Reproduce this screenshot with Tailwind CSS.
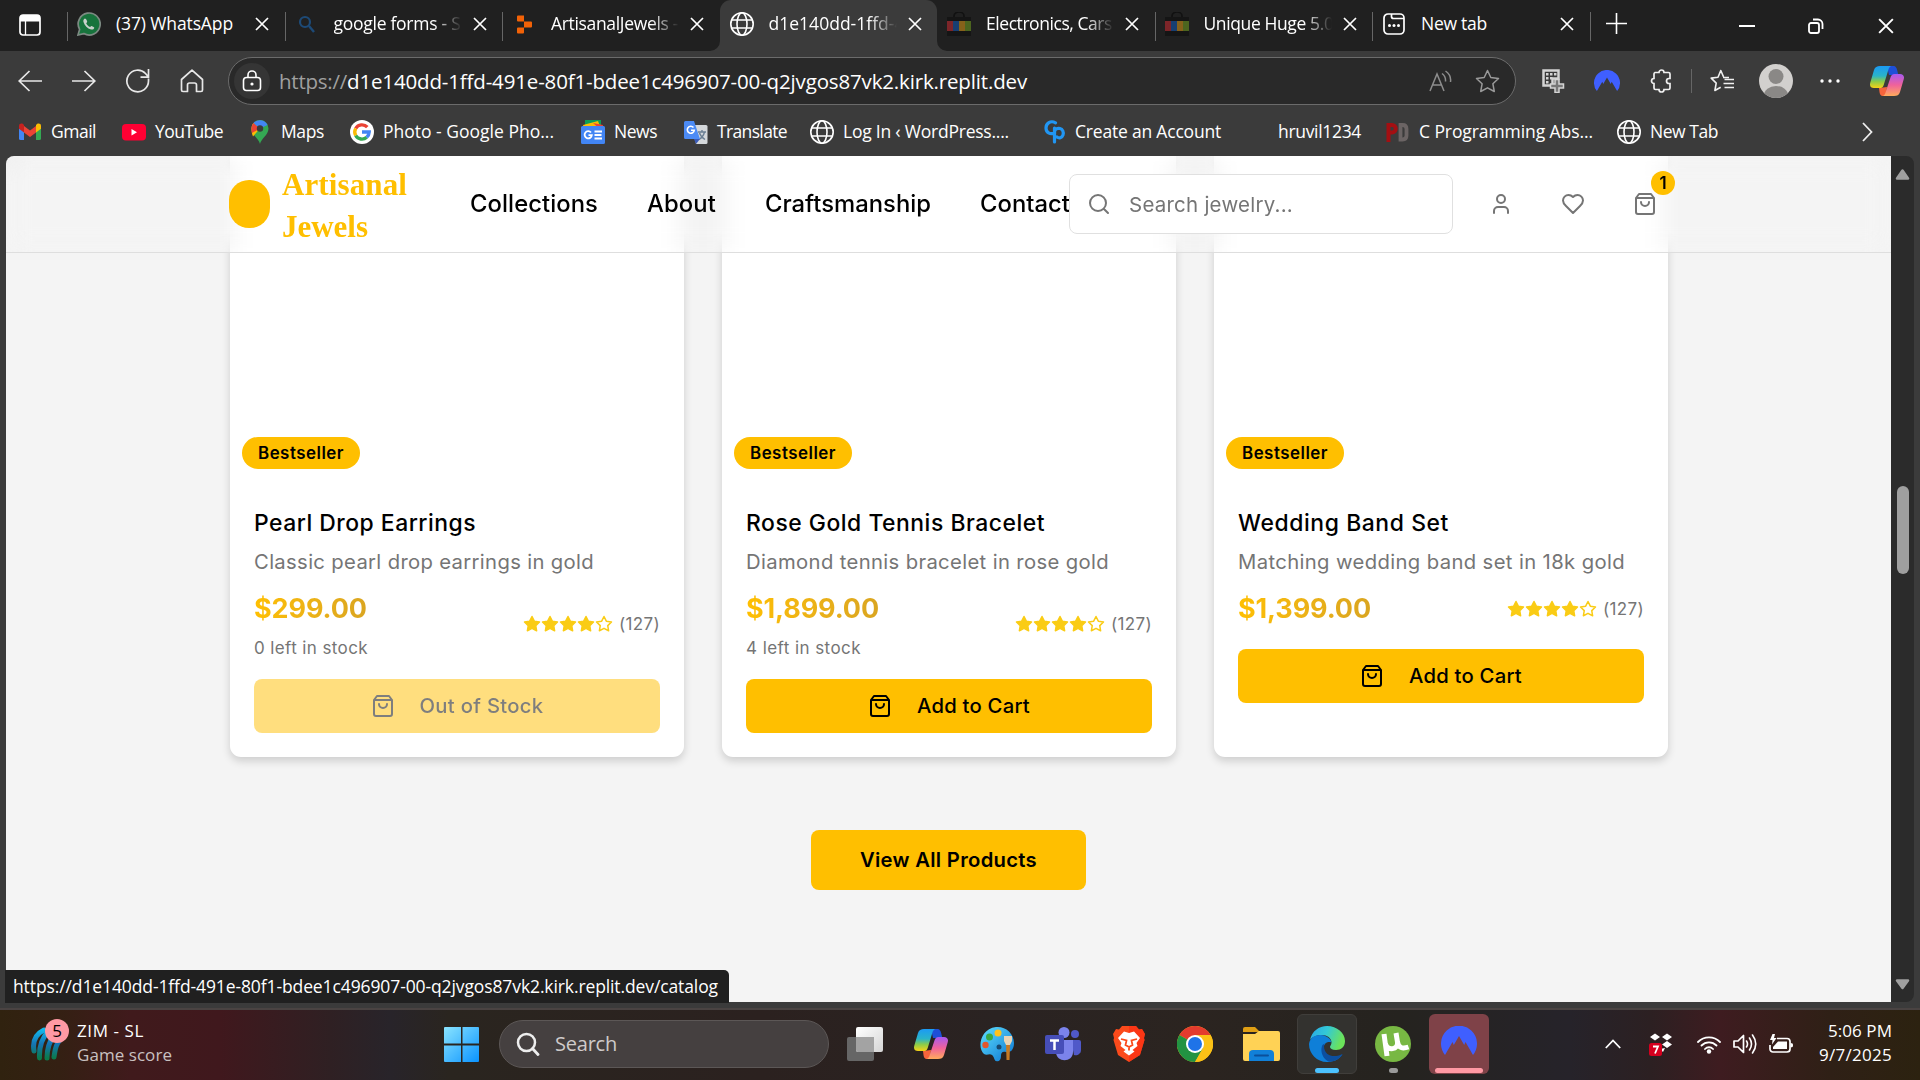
<!DOCTYPE html>
<html lang="en">
<head>
<meta charset="utf-8">
<title>Artisanal Jewels</title>
<script src="https://cdn.jsdelivr.net/npm/@tailwindcss/browser@4"></script>
</head>
<body class="w-[1920px] h-[1080px] overflow-hidden bg-[#3b3b3b] font-['Open_Sans','Noto_Sans',sans-serif] text-white">

<!-- Shared icons -->
<svg class="absolute w-0 h-0">
  <symbol id="x" viewBox="0 0 14 14"><path d="M1 1l12 12M13 1L1 13" fill="none" stroke="currentColor" stroke-width="1.7"/></symbol>
  <symbol id="globe" viewBox="0 0 24 24"><g fill="none" stroke="currentColor" stroke-width="1.6"><circle cx="12" cy="12" r="11.2"/><ellipse cx="12" cy="12" rx="5" ry="11.2"/><path d="M2 8h20M2 16h20"/></g></symbol>
  <symbol id="shop" viewBox="0 0 24 24"><path d="M7 6V4a5 4 0 0 1 10 0v2" fill="none" stroke="#111" stroke-width="1.6"/><path d="M0 5h24v19H0z" fill="#151515"/><path d="M0 9h6v10H0z" fill="#7d2529"/><path d="M6 9h6v10H6z" fill="#173f72"/><path d="M12 9h6v10h-6z" fill="#86611a"/><path d="M18 9h6v10h-6z" fill="#4c651f"/></symbol>
  <symbol id="bag" viewBox="0 0 24 24"><path d="M6 2 3 6v14a2 2 0 0 0 2 2h14a2 2 0 0 0 2-2V6l-3-4ZM3 6h18M16 10a4 4 0 0 1-8 0" fill="none" stroke="currentColor" stroke-width="2" stroke-linecap="round" stroke-linejoin="round"/></symbol>
  <symbol id="star" viewBox="0 0 24 24"><path d="m12 2 3.09 6.26L22 9.27l-5 4.87 1.18 6.88L12 17.77l-6.18 3.25L7 14.14 2 9.27l6.91-1.01z" stroke="#facc15" stroke-width="2" stroke-linejoin="round"/></symbol>
  <symbol id="nord" viewBox="0 0 36 30"><path d="M4 29A18 18 0 1 1 32 29L24.5 16l-1.3 3L18 10l-5.2 9-1.3-3z" fill="#3f5fff"/></symbol>
  <linearGradient id="cpa" x1="0" y1="0" x2="0" y2="1"><stop offset="0" stop-color="#1b9af5"/><stop offset=".45" stop-color="#2ab4c8"/><stop offset=".7" stop-color="#8ccb4a"/><stop offset="1" stop-color="#f7d215"/></linearGradient>
  <linearGradient id="cpb" x1="0" y1="0" x2="0" y2="1"><stop offset="0" stop-color="#a759f0"/><stop offset=".5" stop-color="#f0629b"/><stop offset="1" stop-color="#ffab5c"/></linearGradient>
  <symbol id="copilot" viewBox="0 0 34 30"><path d="M17 0h6c3 0 3.600 2 4.400 5l1 4H19z" fill="#1e4fd8"/><path d="M9 22l8-1-1 9h-3c-3 0-3.400-2-4-8z" fill="#f5643c"/><path d="M10 0h11c-2 1-2.500 3-3.300 6l-4 13c-.8 2.500-2 3-4.200 3H4c-3 0-4.600-2-3.800-5L4 4c1-3 3-4 6-4z" fill="url(#cpa)"/><path d="M24 30H13c2-1 2.500-3 3.300-6l4-12c.8-2.500 2-4 4.200-4H30c3 0 4.600 2 3.800 5L30 26c-1 3-3 4-6 4z" fill="url(#cpb)"/></symbol>
</svg>

<!-- Tab strip -->
<div class="flex h-[51px] bg-[#202020] text-[17.5px] leading-[47px]">
  <div class="w-[67px] shrink-0 flex items-center justify-center pr-2 pb-0.5">
    <svg class="w-[22px] h-[22px]" viewBox="0 0 22 22"><rect x="1" y="1" width="20" height="20" rx="3" fill="none" stroke="#fff" stroke-width="1.7"/><path d="M1 4a3 3 0 0 1 3-3h14a3 3 0 0 1 3 3v3.500H1z" fill="#fff"/><path d="M6.500 7v14" stroke="#fff" stroke-width="1.300"/></svg>
  </div>
  <div class="relative w-[217.5px] shrink-0 flex items-center pl-[10px] pb-1">
    <span class="absolute left-0 top-3 w-px h-[29px] bg-[#666]"></span>
    <svg class="w-6 h-6 mr-[15px] shrink-0" viewBox="0 0 24 24"><path d="M1 23l1.600-5.600A11 11 0 1 1 6.800 21.600z" fill="#17733c" stroke="#7c8a82" stroke-width="1.700"/><path d="M8 6.500c-1.500.5-2 2-1.500 3.500 1 3.500 4 6.500 7.500 7.500 1.600.4 3-.4 3.300-1.800.1-.6-2.600-2-3-1.800l-1.200 1.200c-1.600-.6-3.200-2.200-3.900-3.900l1-1.200c.2-.5-1-3.500-2.200-3.500z" fill="#c7d0ca"/></svg>
    <span class="w-[128px] whitespace-nowrap"><span data-w="117">(37) WhatsApp</span></span>
    <svg class="w-[14px] h-[14px] ml-[11px]"><use href="#x"/></svg>
  </div>
  <div class="relative w-[217.5px] shrink-0 flex items-center pl-[10px] pb-1">
    <span class="absolute left-0 top-3 w-px h-[29px] bg-[#666]"></span>
    <svg class="w-6 h-6 mr-[15px] shrink-0" viewBox="0 0 24 24"><circle cx="10" cy="10" r="5" fill="none" stroke="#1d4a77" stroke-width="2.200"/><path d="M14 14l5 6" stroke="#1d4a77" stroke-width="2.400"/></svg>
    <span class="w-[128px] overflow-hidden whitespace-nowrap mask-r-from-78%"><span data-w="127">google forms - S</span></span>
    <svg class="w-[14px] h-[14px] ml-[11px]"><use href="#x"/></svg>
  </div>
  <div class="relative w-[217.5px] shrink-0 flex items-center pl-[10px] pb-1">
    <span class="absolute left-0 top-3 w-px h-[29px] bg-[#666]"></span>
    <svg class="w-6 h-6 mr-[15px] shrink-0" viewBox="0 0 24 24"><path d="M5 4.500a1 1 0 0 1 1-1h6v6H6a1 1 0 0 1-1-1zM12 9.500h7a1 1 0 0 1 1 1v4a1 1 0 0 1-1 1h-7zM5 16.500a1 1 0 0 1 1-1h6v5a1 1 0 0 1-1 1H6a1 1 0 0 1-1-1z" fill="#f26207"/></svg>
    <span class="w-[128px] overflow-hidden whitespace-nowrap mask-r-from-78%"><span data-w="127">ArtisanalJewels -</span></span>
    <svg class="w-[14px] h-[14px] ml-[11px]"><use href="#x"/></svg>
  </div>
  <div class="relative w-[217.5px] shrink-0 flex items-center pl-[10px] pb-1 bg-[#3b3b3b] rounded-t-[11px]">
    <svg class="absolute -left-[10px] bottom-0 w-[10px] h-[10px]" viewBox="0 0 10 10"><path d="M10 0v10H0A10 10 0 0 0 10 0z" fill="#3b3b3b"/></svg>
    <svg class="absolute -right-[10px] bottom-0 w-[10px] h-[10px]" viewBox="0 0 10 10"><path d="M0 0v10h10A10 10 0 0 1 0 0z" fill="#3b3b3b"/></svg>
    <svg class="w-6 h-6 mr-[15px] shrink-0"><use href="#globe"/></svg>
    <span class="w-[128px] overflow-hidden whitespace-nowrap mask-r-from-78%"><span data-w="136">d1e140dd-1ffd-4</span></span>
    <svg class="w-[14px] h-[14px] ml-[11px]"><use href="#x"/></svg>
  </div>
  <div class="relative w-[217.5px] shrink-0 flex items-center pl-[10px] pb-1">
    <svg class="w-6 h-6 mr-[15px] shrink-0"><use href="#shop"/></svg>
    <span class="w-[128px] overflow-hidden whitespace-nowrap mask-r-from-78%"><span data-w="126">Electronics, Cars</span></span>
    <svg class="w-[14px] h-[14px] ml-[11px]"><use href="#x"/></svg>
  </div>
  <div class="relative w-[217.5px] shrink-0 flex items-center pl-[10px] pb-1">
    <span class="absolute left-0 top-3 w-px h-[29px] bg-[#666]"></span>
    <svg class="w-6 h-6 mr-[15px] shrink-0"><use href="#shop"/></svg>
    <span class="w-[128px] overflow-hidden whitespace-nowrap mask-r-from-78%"><span data-w="130">Unique Huge 5.0</span></span>
    <svg class="w-[14px] h-[14px] ml-[11px]"><use href="#x"/></svg>
  </div>
  <div class="relative w-[217.5px] shrink-0 flex items-center pl-[10px] pb-1">
    <span class="absolute left-0 top-3 w-px h-[29px] bg-[#666]"></span>
    <svg class="w-6 h-6 mr-[15px] shrink-0" viewBox="0 0 24 24"><rect x="2" y="2" width="20" height="20" rx="4" fill="none" stroke="#fff" stroke-width="1.700"/><path d="M9.500 2v2.500a2 2 0 0 0 2 2H22" fill="none" stroke="#fff" stroke-width="1.700"/><circle cx="7.500" cy="13.500" r="1.500" fill="#fff"/><circle cx="12" cy="13.500" r="1.500" fill="#fff"/><circle cx="16.500" cy="13.500" r="1.500" fill="#fff"/></svg>
    <span class="w-[128px] whitespace-nowrap"><span data-w="66">New tab</span></span>
    <svg class="w-[14px] h-[14px] ml-[11px]"><use href="#x"/></svg>
  </div>
  <div class="relative flex items-center pl-[16px] pb-1 flex-1">
    <span class="absolute left-0 top-3 w-px h-[29px] bg-[#666]"></span>
    <svg class="w-[21px] h-[21px]" viewBox="0 0 21 21"><path d="M10.500 0v21M0 10.500h21" stroke="#fff" stroke-width="1.600"/></svg>
    <div class="flex items-center ml-[112px] mt-1">
      <span class="w-4 h-0.5 bg-white"></span>
      <svg class="w-4 h-4 ml-[53px]" viewBox="0 0 16 16"><rect x="1" y="5" width="10" height="10" rx="2" fill="none" stroke="#fff" stroke-width="1.800"/><path d="M5 1.500h5a4.500 4.500 0 0 1 4.500 4.500v5" fill="none" stroke="#fff" stroke-width="1.800"/></svg>
      <svg class="w-4 h-4 ml-[54px]"><use href="#x"/></svg>
    </div>
  </div>
</div>

<!-- Toolbar -->
<div class="flex items-center h-[60px] pl-[3px]">
  <svg class="w-6 h-[22px] mx-[15px] shrink-0" viewBox="0 0 24 22"><path d="M24 11H1.500M11.500 1L1.200 11l10.300 10" fill="none" stroke="#e8e8e8" stroke-width="1.700"/></svg>
  <svg class="w-6 h-[22px] mx-[15px] shrink-0" viewBox="0 0 24 22"><path d="M0 11h22.500M12.500 1l10.300 10-10.300 10" fill="none" stroke="#e8e8e8" stroke-width="1.700"/></svg>
  <svg class="w-6 h-6 mx-[15px] shrink-0" viewBox="0 0 24 24"><path d="M22.500 9.500V12A10.800 10.800 0 1 1 19.500 4.500L22.500 8M22.500 0v8.200H14.500" fill="none" stroke="#e8e8e8" stroke-width="1.700"/></svg>
  <svg class="w-6 h-6 mx-[15px] shrink-0" viewBox="0 0 24 24"><path d="M1.500 10.500L12 1.200l10.500 9.300V21a1.500 1.500 0 0 1-1.500 1.500h-4.500V16a2 2 0 0 0-2-2h-5a2 2 0 0 0-2 2v6.500H3A1.500 1.500 0 0 1 1.500 21z" fill="none" stroke="#e8e8e8" stroke-width="1.700" stroke-linejoin="round"/></svg>
  <div class="flex items-center w-[1288px] h-12 ml-[9px] rounded-full border border-[#6b6b6b] bg-[#292929] pl-[5px] shrink-0">
    <span class="w-9 h-9 rounded-full bg-[#353535] flex items-center justify-center">
      <svg class="w-5 h-[22px]" viewBox="0 0 20 22"><rect x="1.500" y="7.500" width="17" height="13" rx="3" fill="none" stroke="#fff" stroke-width="1.600"/><path d="M6 7.500V5a4 4 0 0 1 8 0v2.500" fill="none" stroke="#fff" stroke-width="1.600"/><circle cx="10" cy="14" r="1.600" fill="#fff"/></svg>
    </span>
    <span class="ml-[9px] flex text-[20.5px] leading-[46px] whitespace-nowrap"><span class="text-[#a0a0a0]" data-w="68">https://</span><span data-w="680">d1e140dd-1ffd-491e-80f1-bdee1c496907-00-q2jvgos87vk2.kirk.replit.dev</span></span>
    <svg class="w-[23px] h-[22px] ml-auto" viewBox="0 0 23 22"><path d="M1 21L8 4l7 17M3.500 15h9M13 3.500q4 3 3.500 8M16.500 1q6 4 5 11" fill="none" stroke="#8d8d8d" stroke-width="1.500"/></svg>
    <svg class="w-[25px] h-6 ml-[23px] mr-[15px]" viewBox="0 0 25 24"><path d="M12.500 1.500l3.300 7 7.700 1-5.600 5.300 1.400 7.700-6.800-3.700-6.800 3.700 1.400-7.700L1.500 9.500l7.700-1z" fill="none" stroke="#9a9a9a" stroke-width="1.500" stroke-linejoin="round"/></svg>
  </div>
  <svg class="w-6 h-6 ml-[25px] mr-[15px] shrink-0" viewBox="0 0 24 24"><path d="M2.500 1.500h15v8h-6v7h-9z" fill="#3b3b3b" stroke="#d4d4d4" stroke-width="2.500"/><path d="M5 4h2.500v2.500H5zM9 4h2.500v2.500H9zM13 4h2.500v2.500H13zM5 8h2.500v2.500H5zM5 12h2.500v2.500H5zM9 8h2.500v2.500H9z" fill="#d4d4d4"/><path d="M14 10.500h4v4.500h4.500v4H18v4.500h-4V19H9.500v-4H14z" fill="#777" stroke="#d4d4d4" stroke-width="1.500"/></svg>
  <svg class="w-[26px] h-[22px] mx-[14px] shrink-0"><use href="#nord"/></svg>
  <svg class="w-6 h-6 mx-[15px] shrink-0" viewBox="0 0 24 24"><path d="M6 3.500h4a2.500 2.500 0 0 1 5 0h4.500a1.500 1.500 0 0 1 1.500 1.500v4.500h-1a2.500 2.500 0 0 0 0 5h1V19a1.500 1.500 0 0 1-1.500 1.500H15a2.500 2.500 0 0 1-5 0H6.500A1.500 1.500 0 0 1 5 19v-4.500a2.500 2.500 0 0 1 0-5V5a1.500 1.500 0 0 1 1-1.500z" fill="none" stroke="#f0f0f0" stroke-width="1.700"/></svg>
  <span class="w-px h-6 bg-[#666] ml-[3px] mr-[3px] shrink-0"></span>
  <svg class="w-6 h-6 mx-[15px] shrink-0" viewBox="0 0 24 24"><path d="M13.500 7.700L10.800 1.500 8 8.200l-6.800.9 5 5-1.300 7.400 5.800-3.200M14.500 10.500H24M13.500 14.500H24M14.500 18.500H24M13 8.500h6" fill="none" stroke="#f0f0f0" stroke-width="1.600" stroke-linejoin="round"/></svg>
  <svg class="w-[34px] h-[34px] mx-[10px] shrink-0" viewBox="0 0 34 34"><defs><clipPath id="av"><circle cx="17" cy="17" r="17"/></clipPath></defs><circle cx="17" cy="17" r="17" fill="#d2d0ce"/><g clip-path="url(#av)" fill="#8a8886"><circle cx="17" cy="12.500" r="7.500"/><ellipse cx="17" cy="31" rx="12" ry="9"/></g></svg>
  <svg class="w-5 h-1 mx-[17px] shrink-0" viewBox="0 0 20 4"><circle cx="2" cy="2" r="1.700" fill="#fff"/><circle cx="10" cy="2" r="1.700" fill="#fff"/><circle cx="18" cy="2" r="1.700" fill="#fff"/></svg>
  <svg class="w-[34px] h-[30px] ml-[13px] shrink-0"><use href="#copilot"/></svg>
</div>

<!-- Bookmarks bar -->
<div class="flex items-center h-[41px] pl-[18px] text-[17.5px] leading-[41px] whitespace-nowrap">
  <div class="flex items-center gap-[9px] w-[104px] shrink-0">
    <svg class="w-6 h-6 shrink-0" viewBox="0 0 24 24"><path d="M1 6v12.500A1.500 1.500 0 0 0 2.500 20H6V9z" fill="#4285f4"/><path d="M23 6v12.500a1.500 1.500 0 0 1-1.500 1.500H18V9z" fill="#34a853"/><path d="M6 6l6 4.500L18 6v6.500L12 17l-6-4.500z" fill="#ea4335"/><path d="M1 6c0-2.500 2.500-3 4-2l1 1v7.500L1 8.700z" fill="#c5221f"/><path d="M23 6c0-2.500-2.500-3-4-2l-1 1v7.500l5-3.800z" fill="#fbbc04"/></svg>
    <span data-w="45">Gmail</span>
  </div>
  <div class="flex items-center gap-[9px] w-[126px] shrink-0">
    <svg class="w-6 h-6 shrink-0" viewBox="0 0 24 24"><rect x="0" y="4" width="24" height="16.500" rx="4" fill="#ff0033"/><path d="M9.500 9v6.500l5.500-3.250z" fill="#fff"/></svg>
    <span data-w="68">YouTube</span>
  </div>
  <div class="flex items-center gap-[9px] w-[102px] shrink-0">
    <svg class="w-6 h-6 shrink-0" viewBox="0 0 24 24"><path d="M12 24c-.8-5-8.500-9-8.500-15.500A8.500 8.500 0 0 1 12 0a8.500 8.500 0 0 1 8.500 8.500C20.500 15 12.800 19 12 24z" fill="#34a853"/><path d="M5.500 3L12 8.500 5 16.500c-1-2-1.500-5-1.500-8 0-2.500 1-4.500 2-5.500z" fill="#fbbc04"/><path d="M5.500 3L12 8.500 4 13c-.8-3.500-1-7 1.500-10z" fill="#ea4335"/><path d="M5.500 3A8.500 8.500 0 0 1 19.500 5L12 8.500z" fill="#4285f4"/><circle cx="12" cy="8.500" r="3.200" fill="#3b3b3b"/></svg>
    <span data-w="43">Maps</span>
  </div>
  <div class="flex items-center gap-[9px] w-[231px] shrink-0">
    <svg class="w-6 h-6 shrink-0" viewBox="0 0 24 24"><circle cx="12" cy="12" r="12" fill="#fff"/><g fill="none" stroke-width="3.400"><path d="M17.300 7.200A7.200 7.200 0 0 0 5.700 8.500" stroke="#ea4335"/><path d="M5.700 8.500a7.200 7.200 0 0 0 0 7" stroke="#fbbc04"/><path d="M5.700 15.500a7.200 7.200 0 0 0 11 1.800" stroke="#34a853"/><path d="M16.700 17.300A7.200 7.200 0 0 0 19.200 12H12" stroke="#4285f4"/></g></svg>
    <span data-w="171">Photo - Google Pho...</span>
  </div>
  <div class="flex items-center gap-[9px] w-[103px] shrink-0">
    <svg class="w-6 h-6 shrink-0" viewBox="0 0 24 24"><path d="M4 0h16v10H4z" fill="#0c9d58"/><path d="M2 5l15-4 3 8H3z" fill="#fbbc04"/><path d="M12 3l10 2-1 6z" fill="#ea4335"/><path d="M0 7.500A1.500 1.500 0 0 1 1.500 6h21A1.500 1.500 0 0 1 24 7.500v15a1.500 1.500 0 0 1-1.500 1.500h-21A1.500 1.500 0 0 1 0 22.500z" fill="#4285f4"/><path d="M13.500 11.500H21M13.500 15h7M13.500 18.500H21M10 12.500a3.600 3.600 0 1 0 .8 2.700H7.500" fill="none" stroke="#fff" stroke-width="1.800"/></svg>
    <span data-w="43">News</span>
  </div>
  <div class="flex items-center gap-[9px] w-[126px] shrink-0">
    <svg class="w-6 h-6 shrink-0" viewBox="0 0 24 24"><path d="M9 5h13a1.500 1.500 0 0 1 1.500 1.500v16A1.500 1.500 0 0 1 22 24H12z" fill="#d5d8db"/><path d="M14 12h8M18 10v2M20.500 12c-1 4-3 6-5.500 7.500M15.500 13c1 3 3 5 5.500 6.500" stroke="#6b7f94" stroke-width="1.400" fill="none"/><path d="M1.500 1H10l6 18H1.500A1.500 1.500 0 0 1 0 17.500v-15A1.500 1.500 0 0 1 1.500 1z" fill="#4c8bf5"/><path d="M10 19h6l-4 5z" fill="#3a5bb8"/><path d="M9.500 7.500a3.500 3.500 0 1 0 .8 2.700H7" fill="none" stroke="#fff" stroke-width="1.600"/></svg>
    <span data-w="70">Translate</span>
  </div>
  <div class="flex items-center gap-[9px] w-[232px] shrink-0">
    <svg class="w-6 h-6 shrink-0"><use href="#globe"/></svg>
    <span data-w="166">Log In ‹ WordPress....</span>
  </div>
  <div class="flex items-center gap-[7px] w-[203px] shrink-0">
    <svg class="w-6 h-6 ml-0.5 shrink-0" viewBox="0 0 24 24"><g fill="none" stroke="#2196f3" stroke-width="3.200" stroke-linecap="round"><path d="M11.500 2.800C6.500 0 2 3.500 2 8s4 7 8.500 5V8"/><path d="M10.500 22V12c0-3 3-4 5.500-3.500s4 3.500 3 6.500-4 3.500-6 2"/></g></svg>
    <span data-w="146">Create an Account</span>
  </div>
  <div class="flex items-center w-[140px] pl-[33px] shrink-0"><span data-w="83">hruvil1234</span></div>
  <div class="flex items-center gap-[9px] w-[232px] shrink-0">
    <svg class="w-6 h-6 shrink-0" viewBox="0 0 24 24"><path d="M3.500 22V5H7a3 3 0 0 1 0 7.500H4" fill="none" stroke="#a30f12" stroke-width="4"/><path d="M15.500 5v14.500h2c3 0 4-2 4-4V9c0-3-1.500-4-4-4z" fill="none" stroke="#6b6464" stroke-width="3.800"/></svg>
    <span class="pl-px" data-w="174">C Programming Abs...</span>
  </div>
  <div class="flex items-center gap-[9px] shrink-0">
    <svg class="w-6 h-6 shrink-0"><use href="#globe"/></svg>
    <span data-w="68">New Tab</span>
  </div>
  <svg class="w-[11px] h-5 ml-auto mr-[47px]" viewBox="0 0 11 20"><path d="M1 1l8.500 9L1 19" fill="none" stroke="#eee" stroke-width="1.800"/></svg>
</div>

<!-- Viewport -->
<div class="relative mt-1 ml-[6px] w-[1908px] h-[846px] flex rounded-lg overflow-hidden bg-[#2b2b2b]">
  <main class="relative w-[1885px] h-full bg-[#f4f4f4] font-['Inter',sans-serif] text-black">
    <div class="grid grid-cols-[454px_454px_454px] gap-[38px] pl-[224px] whitespace-nowrap">
      <article class="bg-white rounded-b-[11px] shadow-[0_4px_8px_rgba(0,0,0,0.16)] h-[601px]">
        <div class="relative h-[325px]"><span class="absolute left-3 bottom-3 h-8 w-[118px] rounded-full bg-[#ffbf00] text-center text-[16.9px] leading-8 font-semibold"><span data-w="86">Bestseller</span></span></div>
        <div class="p-6">
          <h3 class="text-[22.9px] leading-9 font-medium"><span data-w="222">Pearl Drop Earrings</span></h3>
          <p class="mt-1.5 text-[20.25px] leading-[30px] text-[#757575]"><span data-w="340">Classic pearl drop earrings in gold</span></p>
          <div class="mt-[11px] flex items-center justify-between">
            <div>
              <div class="w-fit text-[27px] leading-[42px] font-bold bg-linear-to-r from-[#ffbf00] to-[#daa520] bg-clip-text text-transparent"><span data-w="113">$299.00</span></div>
              <div class="mt-1.5 text-[17px] leading-6 text-[#757575]"><span data-w="114">0 left in stock</span></div>
            </div>
            <div class="flex items-center text-[17px] leading-6 text-[#757575]">
              <svg class="w-[18px] h-[18px] fill-[#facc15]"><use href="#star"/></svg><svg class="w-[18px] h-[18px] fill-[#facc15]"><use href="#star"/></svg><svg class="w-[18px] h-[18px] fill-[#facc15]"><use href="#star"/></svg><svg class="w-[18px] h-[18px] fill-[#facc15]"><use href="#star"/></svg><svg class="w-[18px] h-[18px] fill-none"><use href="#star"/></svg>
              <span class="ml-1.5" data-w="41">(127)</span>
            </div>
          </div>
          <button class="mt-[19px] w-full h-[54px] rounded-lg bg-[#ffbf00] opacity-50 flex items-center justify-center gap-[25px] text-[20.25px] font-medium"><svg class="w-6 h-6"><use href="#bag"/></svg><span data-w="124">Out of Stock</span></button>
        </div>
      </article>
      <article class="bg-white rounded-b-[11px] shadow-[0_4px_8px_rgba(0,0,0,0.16)] h-[601px]">
        <div class="relative h-[325px]"><span class="absolute left-3 bottom-3 h-8 w-[118px] rounded-full bg-[#ffbf00] text-center text-[16.9px] leading-8 font-semibold"><span data-w="86">Bestseller</span></span></div>
        <div class="p-6">
          <h3 class="text-[22.9px] leading-9 font-medium"><span data-w="299">Rose Gold Tennis Bracelet</span></h3>
          <p class="mt-1.5 text-[20.25px] leading-[30px] text-[#757575]"><span data-w="363">Diamond tennis bracelet in rose gold</span></p>
          <div class="mt-[11px] flex items-center justify-between">
            <div>
              <div class="w-fit text-[27px] leading-[42px] font-bold bg-linear-to-r from-[#ffbf00] to-[#daa520] bg-clip-text text-transparent"><span data-w="133">$1,899.00</span></div>
              <div class="mt-1.5 text-[17px] leading-6 text-[#757575]"><span data-w="115">4 left in stock</span></div>
            </div>
            <div class="flex items-center text-[17px] leading-6 text-[#757575]">
              <svg class="w-[18px] h-[18px] fill-[#facc15]"><use href="#star"/></svg><svg class="w-[18px] h-[18px] fill-[#facc15]"><use href="#star"/></svg><svg class="w-[18px] h-[18px] fill-[#facc15]"><use href="#star"/></svg><svg class="w-[18px] h-[18px] fill-[#facc15]"><use href="#star"/></svg><svg class="w-[18px] h-[18px] fill-none"><use href="#star"/></svg>
              <span class="ml-1.5" data-w="41">(127)</span>
            </div>
          </div>
          <button class="mt-[19px] w-full h-[54px] rounded-lg bg-[#ffbf00] flex items-center justify-center gap-[25px] text-[20.25px] font-medium"><svg class="w-6 h-6"><use href="#bag"/></svg><span data-w="113">Add to Cart</span></button>
        </div>
      </article>
      <article class="bg-white rounded-b-[11px] shadow-[0_4px_8px_rgba(0,0,0,0.16)] h-[601px]">
        <div class="relative h-[325px]"><span class="absolute left-3 bottom-3 h-8 w-[118px] rounded-full bg-[#ffbf00] text-center text-[16.9px] leading-8 font-semibold"><span data-w="86">Bestseller</span></span></div>
        <div class="p-6">
          <h3 class="text-[22.9px] leading-9 font-medium"><span data-w="211">Wedding Band Set</span></h3>
          <p class="mt-1.5 text-[20.25px] leading-[30px] text-[#757575]"><span data-w="387">Matching wedding band set in 18k gold</span></p>
          <div class="mt-[11px] flex items-center justify-between">
            <div class="text-[27px] leading-[42px] font-bold bg-linear-to-r from-[#ffbf00] to-[#daa520] bg-clip-text text-transparent"><span data-w="133">$1,399.00</span></div>
            <div class="flex items-center text-[17px] leading-6 text-[#757575]">
              <svg class="w-[18px] h-[18px] fill-[#facc15]"><use href="#star"/></svg><svg class="w-[18px] h-[18px] fill-[#facc15]"><use href="#star"/></svg><svg class="w-[18px] h-[18px] fill-[#facc15]"><use href="#star"/></svg><svg class="w-[18px] h-[18px] fill-[#facc15]"><use href="#star"/></svg><svg class="w-[18px] h-[18px] fill-none"><use href="#star"/></svg>
              <span class="ml-1.5" data-w="41">(127)</span>
            </div>
          </div>
          <button class="mt-[19px] w-full h-[54px] rounded-lg bg-[#ffbf00] flex items-center justify-center gap-[25px] text-[20.25px] font-medium"><svg class="w-6 h-6"><use href="#bag"/></svg><span data-w="113">Add to Cart</span></button>
        </div>
      </article>
    </div>
    <div class="flex justify-center pt-[73px]">
      <button class="w-[275px] h-[60px] rounded-lg bg-[#ffbf00] text-[20.25px] font-semibold"><span data-w="177">View All Products</span></button>
    </div>

    <!-- Site header, floats over the scrolled page -->
    <header class="absolute inset-x-0 top-0 h-[97px] border-b border-[#dedede] backdrop-blur-[12px] flex items-center pl-[223px] text-[23.8px] font-medium">
      <span class="w-[41px] h-12 rounded-[20px] bg-[#ffbf00] shrink-0"></span>
      <div class="w-[189px] pl-3 pt-1 font-['Liberation_Serif',serif] font-bold text-[31px] leading-[42px] text-[#ffbf00]"><span class="block w-fit" data-w="125">Artisanal</span><span class="block w-fit" data-w="86">Jewels</span></div>
      <nav class="flex gap-[49px] ml-[11px] whitespace-nowrap shrink-0">
        <a data-w="128">Collections</a><a data-w="69">About</a><a data-w="166">Craftsmanship</a><a data-w="90">Contact</a>
      </nav>
      <div class="w-[384px] h-[60px] rounded-lg border border-[#e0e0e0] bg-white flex items-center pl-[17px] shrink-0 text-[20.5px] font-normal text-[#757575] absolute left-[1063px] top-[18px]">
        <svg class="w-6 h-6 mr-[18px]" viewBox="0 0 24 24"><path d="m21 21-4.300-4.300M19 11a8 8 0 1 1-16 0 8 8 0 0 1 16 0z" fill="none" stroke="currentColor" stroke-width="2" stroke-linecap="round"/></svg>
        <span class="pt-0.5" data-w="164">Search jewelry...</span>
      </div>
      <div class="absolute left-[1483px] top-9 flex gap-12 text-[#757575]">
        <svg class="w-6 h-6" viewBox="0 0 24 24"><path d="M19 21v-2a4 4 0 0 0-4-4H9a4 4 0 0 0-4 4v2" fill="none" stroke="currentColor" stroke-width="2" stroke-linecap="round"/><circle cx="12" cy="7" r="4" fill="none" stroke="currentColor" stroke-width="2"/></svg>
        <svg class="w-6 h-6" viewBox="0 0 24 24"><path d="M19 14c1.490-1.460 3-3.210 3-5.500A5.500 5.500 0 0 0 16.500 3c-1.760 0-3 .5-4.500 2-1.500-1.500-2.740-2-4.500-2A5.500 5.500 0 0 0 2 8.500c0 2.300 1.500 4.050 3 5.500l7 7Z" fill="none" stroke="currentColor" stroke-width="2" stroke-linejoin="round"/></svg>
        <svg class="w-6 h-6"><use href="#bag"/></svg>
        <span class="absolute left-[162px] -top-[21px] w-6 h-6 rounded-full bg-[#ffbf00] text-black text-[17px] leading-6 font-semibold text-center">1</span>
      </div>
    </header>
  </main>
  <div class="w-[23px] flex flex-col items-center">
    <svg class="w-[15px] h-[11px] mt-[13px]" viewBox="0 0 15 11"><path d="M7.500 1.500l5.500 8H2z" fill="#a0a0a0" stroke="#a0a0a0" stroke-width="2.500" stroke-linejoin="round"/></svg>
    <span class="w-3 h-[88px] mt-[306px] rounded-full bg-[#9f9f9f]"></span>
    <svg class="w-[15px] h-[12px] mt-auto mb-[12px]" viewBox="0 0 15 11"><path d="M7.500 9.500L2 2h11z" fill="#a0a0a0" stroke="#a0a0a0" stroke-width="2.500" stroke-linejoin="round"/></svg>
  </div>
</div>

<!-- Link target bubble -->
<div class="absolute left-[5px] top-[970px] w-[724px] h-[33px] rounded-tr-[5px] bg-[#202020] pl-2 text-[17.500px] leading-8 whitespace-nowrap"><span data-w="705">https://d1e140dd-1ffd-491e-80f1-bdee1c496907-00-q2jvgos87vk2.kirk.replit.dev/catalog</span></div>

<!-- Taskbar -->
<footer class="mt-[6px] h-[72px] border-t-2 border-[#4a4342]">
  <div class="w-full h-full flex items-center pb-0.5 bg-[linear-gradient(90deg,#30220f_0,#342013_60px,#401a1c_130px,#40181d_220px,#2f2023_330px,#28242a_390px,#2a251f_450px,#2b211f_760px,#2a2322_1000px,#2b2420_1200px,#25231f_1400px,#26232a_1570px,#2c2022_1650px,#3e1c20_1720px,#2f2016_1830px,#2c2210_1920px)]">
    <div class="relative w-[444px] pl-[30px] flex items-center shrink-0">
      <svg class="w-[34px] h-[34px]" viewBox="0 0 34 34"><defs><linearGradient id="zg" x1="0" y1="0" x2="0" y2="1"><stop offset="0" stop-color="#13b7ea"/><stop offset=".5" stop-color="#1574b5"/><stop offset="1" stop-color="#0b7a4b"/></linearGradient></defs><g fill="none" stroke="url(#zg)" stroke-width="5" stroke-linecap="round"><path d="M14 3C6 7 2 13 4 24M18 5C11 12 9 20 9.500 31M24 8c-5 7-7 15-7 23M30 13c-5 5-5 11-6 17"/></g></svg>
      <span class="absolute left-[45px] -top-0.5 w-6 h-6 rounded-full bg-[#ff99a4] text-black text-[17px] leading-6 text-center">5</span>
      <div class="ml-[13px] text-[17px] leading-6 whitespace-nowrap -mt-0.5"><div><span data-w="67">ZIM - SL</span></div><div class="text-[#c9c1c1]"><span data-w="95">Game score</span></div></div>
    </div>
    <svg class="w-[35px] h-[35px] shrink-0" viewBox="0 0 35 35"><defs><linearGradient id="win" x1="0" y1="0" x2="1" y2="1"><stop offset="0" stop-color="#8ae4ff"/><stop offset="1" stop-color="#0a93ff"/></linearGradient></defs><path d="M1 0h16v16.500H0V1a1 1 0 0 1 1-1zM18.500 0H34a1 1 0 0 1 1 1v15.500H18.500zM0 18.500h17V35H1a1 1 0 0 1-1-1zM18.500 18.500H35V34a1 1 0 0 1-1 1H18.500z" fill="url(#win)"/></svg>
    <div class="w-[330px] h-12 ml-5 rounded-full bg-[#454040] border border-[#5c5756] flex items-center pl-[16px] text-[20px] text-[#cfcbca] shrink-0">
      <svg class="w-6 h-6 mr-[15px]" viewBox="0 0 24 24"><circle cx="10.500" cy="10.500" r="8.500" fill="none" stroke="#eee" stroke-width="2.500"/><path d="M16.500 16.500L22 22.500" stroke="#eee" stroke-width="2.800" stroke-linecap="round"/></svg>
      <span data-w="62">Search</span>
    </div>
    <div class="flex gap-1.5 ml-[6px] shrink-0">
      <span class="w-[60px] h-[60px] grid place-items-center"><svg class="w-9 h-9" viewBox="0 0 36 36"><defs><linearGradient id="tv" x1="0" y1="0" x2="1" y2="1"><stop offset="0" stop-color="#fff"/><stop offset="1" stop-color="#d5d5d5"/></linearGradient></defs><rect y="11" width="27" height="24" rx="2" fill="#666"/><rect x="9" y="1" width="27" height="25" rx="2" fill="url(#tv)"/><path d="M9 11h18v15H11a2 2 0 0 1-2-2z" fill="#a3a3a3"/></svg></span>
      <span class="w-[60px] h-[60px] grid place-items-center"><svg class="w-[34px] h-[30px]"><use href="#copilot"/></svg></span>
      <span class="w-[60px] h-[60px] grid place-items-center"><svg class="w-9 h-9" viewBox="0 0 36 36"><defs><linearGradient id="pt" x1="0" y1="0" x2="1" y2="1"><stop offset="0" stop-color="#5fe0ff"/><stop offset="1" stop-color="#0a74d1"/></linearGradient></defs><path d="M17 1c9-1 18 6 18 16 0 7-4 10-8 9s-5 1-5 4c0 4-2 6-5 5-2-.6-1.500-4-4-6s-5 1-8-1C-2 22 1 3 17 1z" fill="url(#pt)"/><circle cx="19" cy="7" r="3.500" fill="#ffc21a"/><circle cx="10.500" cy="11" r="3.500" fill="#39a845"/><circle cx="6.500" cy="19" r="3.200" fill="#e3562b"/><circle cx="20" cy="21" r="2.500" fill="#17496f"/><path d="M27 18h4l-.5 16h-3z" fill="#c77a24"/><path d="M25 10h8v5l-2 4h-4l-2-4z" fill="#e8d3b4"/></svg></span>
      <span class="w-[60px] h-[60px] grid place-items-center"><svg class="w-9 h-9" viewBox="0 0 36 36"><circle cx="19" cy="6.500" r="5.500" fill="#7b83eb"/><circle cx="30" cy="8" r="4" fill="#5059c9"/><path d="M26 14h8a2 2 0 0 1 2 2v8c0 4-4 6-7 5z" fill="#5059c9"/><path d="M11 14h17v12c0 11-17 11-17 0z" fill="#7b83eb"/><rect y="9" width="19" height="19" rx="2" fill="#464eb8"/><path d="M5 14.500h9M9.500 14.500V24" stroke="#fff" stroke-width="2.500"/></svg></span>
      <span class="w-[60px] h-[60px] grid place-items-center"><svg class="w-9 h-9" viewBox="0 0 36 36"><path d="M11 0h14l3 3.500 3-.5 3 5-1 4 .5 2-4.500 15-11 7-11-7L2.500 14 3 12 2 8l3-5 3 .5z" fill="#fb4a1b"/><path d="M18 0h7l3 3.500 3-.5 3 5-1 4 .5 2-4.500 15-11 7z" fill="#fb2d12" opacity=".7"/><path d="M18 7l5-1.500 6 6.500-3.500 5 1 3-5 4 2 1.500-5.500 4-5.500-4 2-1.500-5-4 1-3L7 12l6-6.500z" fill="#fff"/><path d="M10 13l5.500 1.500-1 4.500 3.500 2 3.500-2-1-4.500L26 13M18 21v3.500" fill="none" stroke="#fb4a1b" stroke-width="1.800"/></svg></span>
      <span class="w-[60px] h-[60px] grid place-items-center"><svg class="w-9 h-9" viewBox="0 0 36 36"><circle cx="18" cy="18" r="18" fill="#fbc116"/><path d="M18 18L2.400 9A18 18 0 0 1 33.600 9z" fill="#e33b2e"/><path d="M2.400 9A18 18 0 0 0 18 36l7.800-13.500L18 18z" fill="#229342"/><path d="M18 9h15.600A18 18 0 0 1 18 36l7.800-13.500z" fill="#fbc116"/><circle cx="18" cy="18" r="9" fill="#fff"/><circle cx="18" cy="18" r="7" fill="#1f73e8"/></svg></span>
      <span class="w-[60px] h-[60px] grid place-items-center"><svg class="w-[37px] h-9" viewBox="0 0 37 36"><path d="M0 3a2 2 0 0 1 2-2h10l5 5H0z" fill="#e09f14"/><path d="M0 8h12l4-3h19a2 2 0 0 1 2 2v26a2 2 0 0 1-2 2H2a2 2 0 0 1-2-2z" fill="#ffd255"/><path d="M6 35V28a4 4 0 0 1 4-4h17a4 4 0 0 1 4 4v7z" fill="#1180d8"/><path d="M12 29.500h13" stroke="#0b4f9a" stroke-width="2" stroke-linecap="round"/></svg></span>
      <span class="relative w-[60px] h-[60px] grid place-items-center rounded-md bg-[#33322f] border border-[#403e3b]"><svg class="w-9 h-9" viewBox="0 0 36 36"><defs><linearGradient id="e1" x1="0" y1="0" x2="1" y2=".3"><stop offset="0" stop-color="#28a6e8"/><stop offset=".5" stop-color="#33c9d6"/><stop offset="1" stop-color="#6be35a"/></linearGradient></defs><path d="M1 14C3 5 10 0 18 0c10 0 18 7 18 15 0 6-4 9-9 9-4 0-6-1.500-6-3s1.500-2 1.500-4.500C22.500 12 18 9 13 9S3 11 1 14z" fill="url(#e1)"/><path d="M0 18C1 11 7 8.500 12 9c6 .5 10 4 10.500 7.500-2-1-5-.5-6.500 1.500-4 5 0 14 8 14 4 0 6-1 9-3-4 5-9 7-15 7C8 36 0 28 0 18z" fill="#0f7fd8"/><path d="M13 20c-2 6 1 13 7 15.800 6-.3 10.500-3 13.300-6.800.4-.8-.3-1-1-.6C25 32 15 30 15 20c0-1 .5-2 1-2.500-1.500.5-2.500 1-3 2.500z" fill="#0c4fa0"/></svg><span class="absolute bottom-0 w-6 h-[5px] rounded-full bg-[#4cc2ff]"></span></span>
      <span class="relative w-[60px] h-[60px] grid place-items-center"><svg class="w-9 h-9" viewBox="0 0 36 36"><circle cx="18" cy="18" r="18" fill="#78b843"/><path d="M9 8l3 22M10.500 18c2 7 13 6 12-2L21 7M22.500 16c1 6 5 7 11 5" fill="none" stroke="#fff" stroke-width="5"/></svg><span class="absolute bottom-px w-[9px] h-[5px] rounded-full bg-[#9a9a9a]"></span></span>
      <span class="relative w-[60px] h-[60px] grid place-items-center rounded-md bg-[#7f4248]"><svg class="w-9 h-[30px] mb-1.5"><use href="#nord"/></svg><span class="absolute bottom-px w-12 h-[5px] rounded-full bg-[#ff99a4]"></span></span>
    </div>
    <svg class="w-4 h-[10px] ml-[116px] shrink-0" viewBox="0 0 16 10"><path d="M.8 9L8 1.500 15.200 9" fill="none" stroke="#fff" stroke-width="1.800"/></svg>
    <svg class="w-6 h-6 ml-[28px] shrink-0" viewBox="0 0 24 24"><path d="M1 5l5-3.500L11 5 6 8.500zM13 5l5-3.500L23 5l-5 3.500zM13 12.500L18 9l5 3.500L18 16zM11 17l5-1-2 4z" fill="#fff"/><rect x="0" y="11" width="13" height="13" rx="2.500" fill="#d6001f"/><path d="M4 14.500h5L6 21.500" fill="none" stroke="#fff" stroke-width="1.800"/></svg>
    <svg class="w-6 h-[19px] ml-[24px] shrink-0" viewBox="0 0 24 19"><g fill="none" stroke="#fff" stroke-width="1.800" stroke-linecap="round"><path d="M1 7a15.500 15.500 0 0 1 22 0M4.500 10.500a10.500 10.500 0 0 1 15 0M8 14a5.500 5.500 0 0 1 8 0"/></g><circle cx="12" cy="16.500" r="2.200" fill="#fff"/></svg>
    <svg class="w-6 h-5 ml-[12px] shrink-0" viewBox="0 0 24 20"><path d="M1 7h4l5.500-5.500v17L5 13H1z" fill="none" stroke="#fff" stroke-width="1.700" stroke-linejoin="round"/><path d="M13.500 7q2 3 0 6M16.500 4q4 6 0 12M19.500 1q6.500 9 0 18" fill="none" stroke="#fff" stroke-width="1.600" stroke-linecap="round"/></svg>
    <svg class="w-6 h-5 ml-[12px] shrink-0" viewBox="0 0 24 20"><path d="M8 4.500h10a3 3 0 0 1 3 3V15a3 3 0 0 1-3 3H4a3 3 0 0 1-3-3v-4" fill="none" stroke="#fff" stroke-width="1.700"/><path d="M9 7.500h9V15H4v-2z" fill="#fff"/><path d="M21.500 9v4.500c2 0 2.500-.8 2.500-2.200S23.500 9 21.500 9zM3.500 0L1 6h2.500L3 10.500 7.500 4H5L6 0z" fill="#fff"/></svg>
    <div class="ml-auto mr-[28px] text-right text-[17px] leading-6 whitespace-nowrap -mt-0.5"><div><span data-w="64">5:06 PM</span></div><div><span data-w="73">9/7/2025</span></div></div>
  </div>
</footer>

<script>
  // Tracks each label out or in so that it fills the width given in data-w.
  function fitLabels() {
    document.querySelectorAll('[data-w]').forEach(function (el) {
      el.style.letterSpacing = '0px';
      var range = document.createRange();
      range.selectNodeContents(el);
      var natural = range.getBoundingClientRect().width;
      el.style.letterSpacing = ((el.dataset.w - natural) / el.textContent.length) + 'px';
    });
  }
  window.addEventListener('load', function () {
    document.fonts.ready.then(fitLabels);
  });
</script>
</body>
</html>
